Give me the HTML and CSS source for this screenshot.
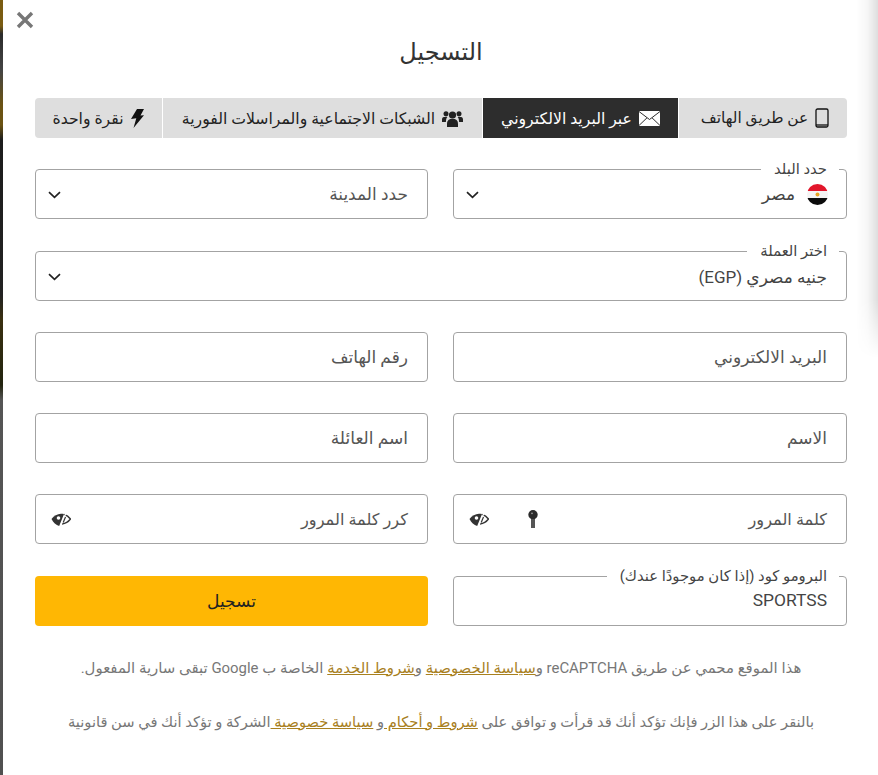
FILE: index.html
```html
<!DOCTYPE html>
<html lang="ar" dir="rtl">
<head>
<meta charset="utf-8">
<title>التسجيل</title>
<link rel="stylesheet" href="styles.css">
</head>
<body>
<div class="backdrop" dir="ltr">
  <div class="edge-left"></div>
  <main class="modal" dir="rtl">
    <div class="edge-right"></div>
    <button class="close" type="button" aria-label="close">
      <svg viewBox="0 0 18 18" width="18" height="18"><path d="M2 2 16 16M16 2 2 16" stroke="#777" stroke-width="3.4" fill="none"/></svg>
    </button>
    <h1 class="title">التسجيل</h1>
    <nav class="tabs">
      <a class="tab tab-phone">
        <svg class="ico" viewBox="0 0 14 20" width="14" height="20"><rect x="1" y="1" width="12" height="18" rx="1.5" fill="none" stroke="#111" stroke-width="1.3"/><path d="M1 17h12" stroke="#111" stroke-width="1.3"/></svg>
        <span>عن طريق الهاتف</span>
      </a>
      <a class="tab tab-mail active">
        <svg class="ico" viewBox="0 0 21 15" width="21" height="15"><rect x="0" y="0" width="21" height="15" fill="#fff"/><path d="M0 .5 10.500 8.500 21 .5M0 14.500 8 6.800M21 14.500 13 6.800" stroke="#2d2d2d" stroke-width="1" fill="none"/></svg>
        <span>عبر البريد الالكتروني</span>
      </a>
      <a class="tab tab-social">
        <svg class="ico" viewBox="0 0 21 17" width="21" height="17"><circle cx="10.500" cy="5" r="3.600" fill="#222"/><circle cx="4" cy="3.800" r="2.500" fill="#222"/><circle cx="17" cy="3.800" r="2.500" fill="#222"/><path d="M5 17v-3.600c0-3 2-4.700 5.500-4.700s5.500 1.700 5.500 4.700V17z" fill="#222"/><path d="M0 12V9.500C0 7.500 1.300 6.800 3.800 6.800c.6 0 1.200.1 1.600.3-.9 1-1.400 2.300-1.500 4.900zM21 12V9.500c0-2-1.300-2.700-3.800-2.700-.6 0-1.200.1-1.600.3.900 1 1.400 2.300 1.500 4.900z" fill="#222"/></svg>
        <span>الشبكات الاجتماعية والمراسلات الفورية</span>
      </a>
      <a class="tab tab-click">
        <svg class="ico" viewBox="0 0 13 19" width="13" height="19"><path d="M6 0h7L9.500 6.500 13 6.200 2.500 19l2.800-9.800L0 10z" fill="#111"/></svg>
        <span>نقرة واحدة</span>
      </a>
    </nav>
    <form class="form">
      <fieldset class="field notched first">
        <legend>حدد البلد</legend>
        <div class="value country">
          <svg class="flag" viewBox="0 0 21 21" width="21" height="21"><clipPath id="fc"><circle cx="10.500" cy="10.500" r="10.500"/></clipPath><g clip-path="url(#fc)"><rect width="21" height="7" fill="#e2162b"/><rect y="7" width="21" height="7" fill="#f4f4f4"/><rect y="14" width="21" height="7" fill="#0b0b0b"/></g><circle cx="10.500" cy="10.500" r="2" fill="#e5a426"/></svg>
          <span>مصر</span>
        </div>
        <svg class="chevron" viewBox="0 0 13 8" width="13" height="8"><path d="M1 1.200 6.500 6.300 12 1.200" fill="none" stroke="#222" stroke-width="1.700"/></svg>
      </fieldset>
      <fieldset class="field first">
        <div class="placeholder">حدد المدينة</div>
        <svg class="chevron" viewBox="0 0 13 8" width="13" height="8"><path d="M1 1.200 6.500 6.300 12 1.200" fill="none" stroke="#222" stroke-width="1.700"/></svg>
      </fieldset>
      <fieldset class="field notched wide">
        <legend>اختر العملة</legend>
        <div class="value currency">جنيه مصري (EGP)</div>
        <svg class="chevron" viewBox="0 0 13 8" width="13" height="8"><path d="M1 1.200 6.500 6.300 12 1.200" fill="none" stroke="#222" stroke-width="1.700"/></svg>
      </fieldset>
      <fieldset class="field"><div class="placeholder">البريد الالكتروني</div></fieldset>
      <fieldset class="field"><div class="placeholder">رقم الهاتف</div></fieldset>
      <fieldset class="field"><div class="placeholder">الاسم</div></fieldset>
      <fieldset class="field"><div class="placeholder">اسم العائلة</div></fieldset>
      <fieldset class="field">
        <div class="placeholder password">كلمة المرور</div>
        <svg class="key" viewBox="0 0 10 18" width="10" height="18"><circle cx="5" cy="4.800" r="4.700" fill="#2b2b2b"/><circle cx="4" cy="3.300" r=".9" fill="#999"/><path d="M3 9h4v9H3z" fill="#555"/></svg>
        <svg class="eye" viewBox="0 0 20 16" width="20" height="16"><use href="#eye-off"/></svg>
      </fieldset>
      <fieldset class="field">
        <div class="placeholder password">كرر كلمة المرور</div>
        <svg class="eye" viewBox="0 0 20 16" width="20" height="16"><use href="#eye-off"/></svg>
      </fieldset>
      <fieldset class="field notched last">
        <legend>البرومو كود (إذا كان موجودًا عندك)</legend>
        <div class="value promo">SPORTSS</div>
      </fieldset>
      <button class="submit" type="button">تسجيل</button>
    </form>
    <p class="note note-first">هذا الموقع محمي عن طريق reCAPTCHA و<a>سياسة الخصوصية</a> و<a>شروط الخدمة</a> الخاصة ب Google تبقى سارية المفعول.</p>
    <p class="note note-second">بالنقر على هذا الزر فإنك تؤكد أنك قد قرأت و توافق على <a>شروط و أحكام </a>و <a>سياسة خصوصية </a>الشركة و تؤكد أنك في سن قانونية</p>
  </main>
</div>
<svg class="defs" width="0" height="0" aria-hidden="true"><defs><g id="eye-off"><path d="M13 3.500C15.800 4.300 18 6 19.500 8 17.500 10.800 14.500 12.600 11 12.900" fill="none" stroke="#333" stroke-width="1.500"/><path d="M.5 8C3 4.600 6.300 2.800 10 2.700c1 0 2 .1 3 .4L8.200 15C4.900 14 2.300 11.500.5 8Z" fill="#333"/><circle cx="7.500" cy="7" r="1.800" fill="#fff"/><path d="M15.500 .8 9.500 15" stroke="#fff" stroke-width="1.300"/><path d="M14.500 6 12.200 11.500" stroke="#333" stroke-width="1.200"/></g></defs></svg>
</body>
</html>
```
FILE: styles.css
```css
* { box-sizing: border-box; }
html, body { margin: 0; height: 775px; overflow: hidden; }
body { font-family: Roboto, "Noto Sans", "DejaVu Sans", sans-serif; color: #333; background: #fff; }
.defs { position: absolute; }
.backdrop { display: flex; width: 878px; height: 775px; }
.edge-left { flex: 0 0 3px; background: linear-gradient(#7a5c12 0, #7a5c12 26px, #2b2b2b 34px, #444 70px, #6b5313 105px, #6b5313 125px, #1c1c1c 140px, #222 295px, #3a3010 320px, #22240f 385px, #555 400px, #505050 775px); }
.modal { flex: 1; position: relative; background: #fff; padding: 0 31px 0 32px; }
.edge-right { position: absolute; right: 0; top: 0; width: 22px; height: 360px; background: linear-gradient(to right, rgba(0,0,0,0), rgba(0,0,0,.03) 50%, rgba(0,0,0,.13)); -webkit-mask-image: linear-gradient(#000 300px, transparent 358px); mask-image: linear-gradient(#000 300px, transparent 358px); }
.close { position: absolute; left: 13px; top: 11px; width: 18px; height: 18px; padding: 0; border: 0; background: none; }
.close svg { display: block; }
.title { margin: 0; height: 98px; padding-top: 37px; font-size: 24px; line-height: 30px; font-weight: 400; text-align: center; color: #333; }
.tabs { display: flex; height: 40px; gap: 1px; background: #fff; }
.tab { display: flex; align-items: center; justify-content: center; gap: 7px; background: #dedede; font-size: 15.700px; color: #222; white-space: nowrap; }
.tab-phone { width: 168px; border-radius: 0 4px 4px 0; padding-left: 4px; font-size: 15.400px; }
.tab-mail { width: 195px; }
.tab-social { width: 319px; }
.tab-click { flex: 1; border-radius: 4px 0 0 4px; padding-right: 1px; }
.tab.active { background: #2d2d2d; color: #fff; }
.form { display: grid; grid-template-columns: 394px 393px; column-gap: 25px; row-gap: 31px; margin-top: 31px; }
.field { position: relative; margin: 0; min-width: 0; height: 50px; padding: 0 19px; border: 1px solid #a3a3a3; border-radius: 4px; display: flex; align-items: center; }
.first { margin-bottom: 1px; }
.notched { display: block; margin-top: -7px; height: 57px; }
.last { margin-top: -6px; }
.wide { grid-column: 1 / -1; }
.field legend { margin-right: -12px; padding: 0 12px 0 13px; font-size: 14.800px; line-height: 14px; color: #444; height: 14px; }
.placeholder { font-size: 17px; color: #555; }
.password { font-size: 16.200px; }
.value { font-size: 17px; color: #444; line-height: 22px; margin-top: 7px; }
.currency { margin-top: 8px; }
.promo { font-family: Roboto, sans-serif; font-size: 17.400px; margin-top: 6px; }
.country { display: flex; align-items: center; gap: 12px; margin-right: -1px; }
.flag { display: block; }
.chevron { position: absolute; left: 12px; bottom: 19px; }
.key { position: absolute; left: 74px; top: 15px; }
.eye { position: absolute; left: 15px; top: 16px; }
.submit { height: 50px; margin-top: 1px; border: 0; border-radius: 4px; background: #ffb703; font: inherit; font-size: 17px; color: #222; }
.note { margin: 0; line-height: 20px; color: #777; text-align: center; white-space: nowrap; }
.note-first { margin-top: 32px; font-size: 14.930px; }
.note-second { margin-top: 34px; font-size: 14.680px; }
.note a { color: #a8801e; text-decoration: underline; }
```
